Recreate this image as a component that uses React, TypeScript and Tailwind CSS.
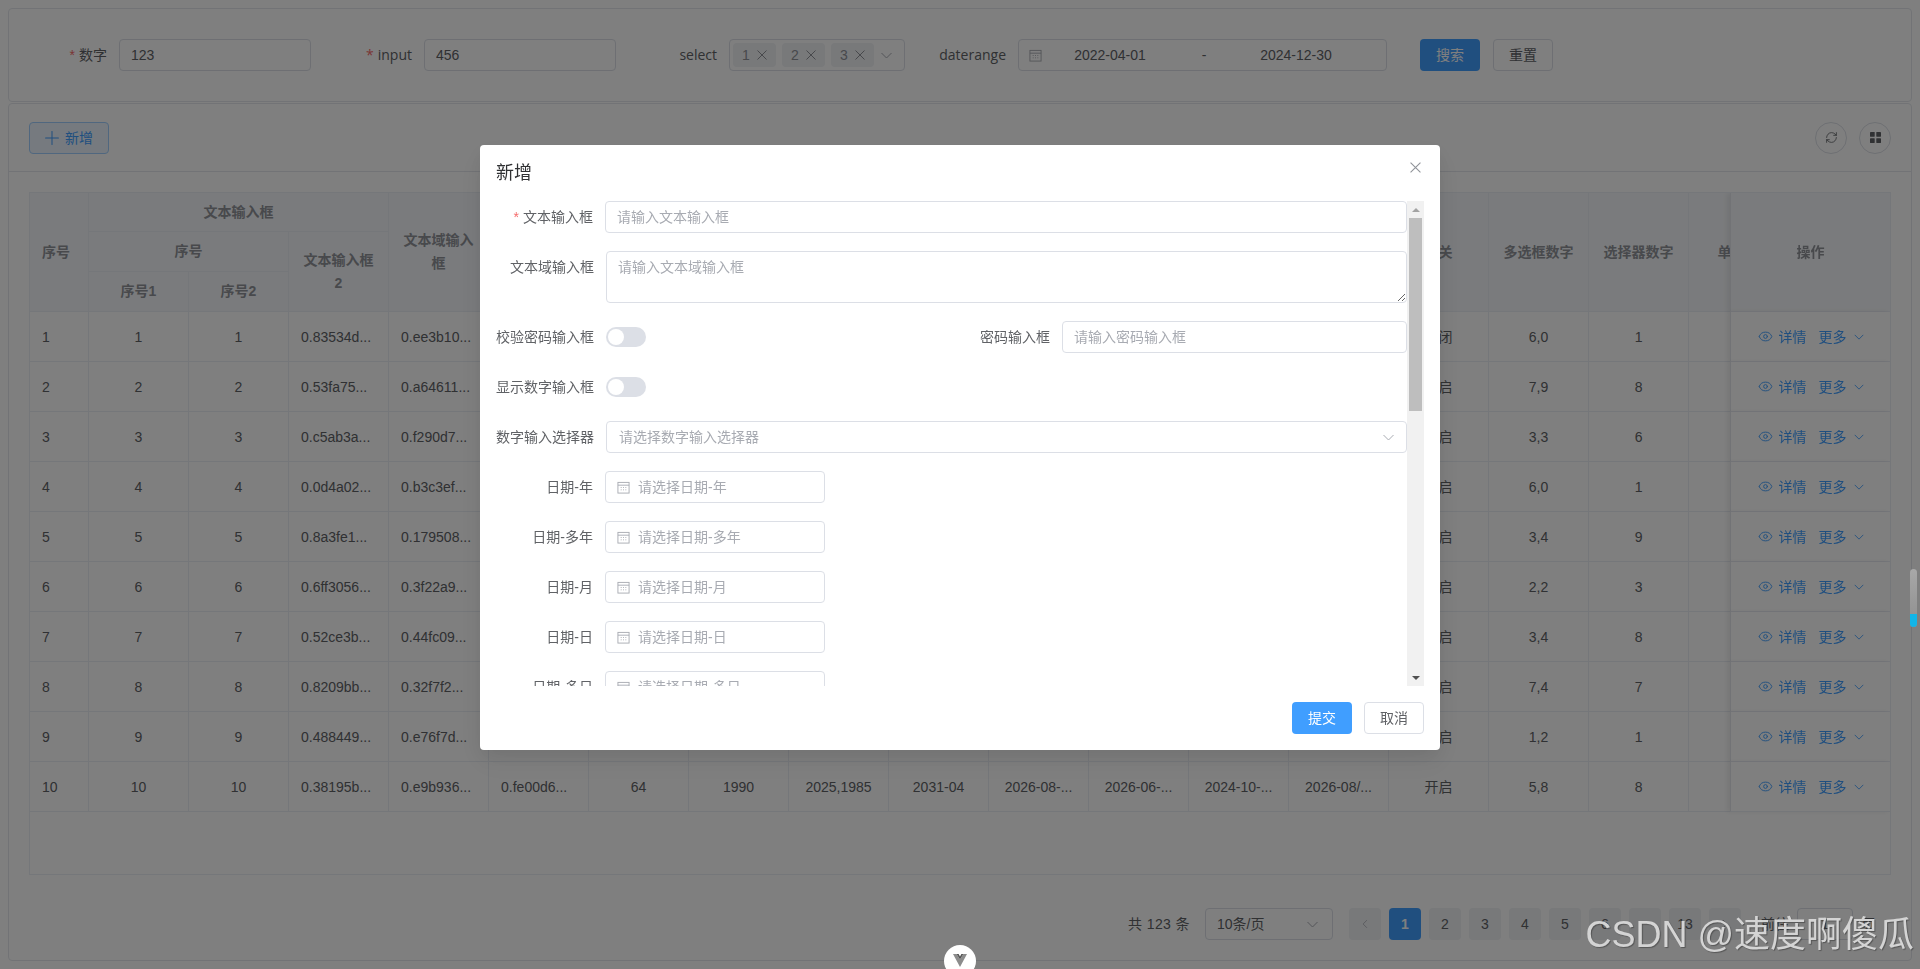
import React from 'react';
import { Eye, Plus, RefreshCw } from 'lucide-react';

const Chevron = ({ className = 'w-[11px] h-[7px] text-[#a8abb2]' }: { className?: string }) => (
  <svg viewBox="0 0 11 7" className={className} fill="none" stroke="currentColor" strokeWidth="1">
    <path d="M0.5 1 L5.5 6 L10.5 1" />
  </svg>
);

const Cross = ({ className = 'w-[10px] h-[10px] text-[#909399]' }: { className?: string }) => (
  <svg viewBox="0 0 10 10" className={className} fill="none" stroke="currentColor" strokeWidth="1">
    <path d="M0.5 0.5 L9.5 9.5 M9.5 0.5 L0.5 9.5" />
  </svg>
);

const CalendarIcon = () => (
  <svg viewBox="0 0 14 14" className="w-[13px] h-[13px] shrink-0 text-[#a8abb2]" fill="none" stroke="currentColor" strokeWidth="1">
    <rect x="1" y="1.5" width="12" height="11.5" />
    <path d="M1 4.5 H13" />
    <path d="M4 7 H5 M6.5 7 H7.5 M9 7 H10 M4 9.5 H5 M6.5 9.5 H7.5 M9 9.5 H10" />
  </svg>
);

const inputClass =
  'block w-full h-8 px-[11px] border border-[#dcdfe6] rounded text-sm text-[#606266] bg-white outline-none placeholder:text-[#a8abb2]';

// rows 1-9 sit behind the dialog from column 6 on
const rest = ['0.fe00d6...', '64', '1990', '2025,1985', '2031-04', '2026-08-...', '2026-06-...', '2024-10-...', '2026-08/...'];

const rows = [
  ['1', '0.83534d...', '0.ee3b10...', '关闭', '6,0', '1'],
  ['2', '0.53fa75...', '0.a64611...', '开启', '7,9', '8'],
  ['3', '0.c5ab3a...', '0.f290d7...', '开启', '3,3', '6'],
  ['4', '0.0d4a02...', '0.b3c3ef...', '开启', '6,0', '1'],
  ['5', '0.8a3fe1...', '0.179508...', '开启', '3,4', '9'],
  ['6', '0.6ff3056...', '0.3f22a9...', '开启', '2,2', '3'],
  ['7', '0.52ce3b...', '0.44fc09...', '开启', '3,4', '8'],
  ['8', '0.8209bb...', '0.32f7f2...', '开启', '7,4', '7'],
  ['9', '0.488449...', '0.e76f7d...', '开启', '1,2', '1'],
  ['10', '0.38195b...', '0.e9b936...', '开启', '5,8', '8'],
];

const hiddenHeads = ['密码输入框', '数字输入框', '日期-年', '日期-多年', '日期-月', '日期-日', '日期-多日', '日期范围', '日期格式'];

const th = 'border-r border-b border-[#ebeef5] bg-[#f5f7fa] px-3 text-sm font-bold text-[#909399] leading-[23px] text-center';
const td = 'h-[50px] border-r border-b border-[#ebeef5] px-3 text-sm text-[#606266] text-center whitespace-nowrap overflow-hidden';
const fixedShadow = 'sticky right-0 border-r-0 shadow-[-3px_0_5px_rgba(0,0,0,0.07)] border-l border-l-[#e4e7ed]';
const latin = "font-['Open_Sans','Noto_Sans_CJK_SC',sans-serif]";

const SearchBar = () => (
  <div className="h-[94px] flex items-center gap-[13px] px-[10px] border border-[#e4e7ed] rounded text-sm text-[#606266]">
    <div className="flex items-center">
      <label className="w-[100px] pr-3 text-right"><span className="text-[#f56c6c] mr-1">*</span>数字</label>
      <input readOnly value="123" className={`${inputClass} !w-[192px]`} />
    </div>
    <div className="flex items-center">
      <label className={`w-[100px] pr-3 text-right ${latin}`}><span className="text-[#f56c6c] mr-1">*</span>input</label>
      <input readOnly value="456" className={`${inputClass} !w-[192px]`} />
    </div>
    <div className="flex items-center">
      <label className={`w-[100px] pr-3 text-right ${latin}`}>select</label>
      <div className="w-[176px] h-8 flex items-center gap-[6px] pl-[3px] border border-[#dcdfe6] rounded">
        {['1', '2', '3'].map((v) => (
          <span key={v} className="w-[43px] h-6 flex items-center justify-between pl-[9px] pr-[9px] bg-[#f0f2f5] rounded text-[#909399]">
            {v}
            <Cross />
          </span>
        ))}
        <span className="ml-[1px]"><Chevron /></span>
      </div>
    </div>
    <div className="flex items-center">
      <label className={`w-[100px] pr-3 text-right ${latin}`}>daterange</label>
      <div className="w-[369px] h-8 flex items-center pl-[10px] border border-[#dcdfe6] rounded">
        <CalendarIcon />
        <span className="w-[128px] ml-1 text-center">2022-04-01</span>
        <span className="w-[60px] text-center">-</span>
        <span className="w-[124px] text-center">2024-12-30</span>
      </div>
    </div>
    <button className="ml-[20px] w-[60px] h-8 rounded bg-[#409eff] text-white">搜索</button>
    <button className="w-[60px] h-8 rounded border border-[#dcdfe6] bg-white">重置</button>
  </div>
);

const DataTable = () => (
  <div className="h-[683px] border border-[#ebeef5] overflow-hidden">
    <table className="w-[1919px] table-fixed border-separate border-spacing-0">
      <colgroup>
        <col className="w-[59px]" />
        {Array.from({ length: 17 }, (_, i) => (
          <col key={i} className="w-[100px]" />
        ))}
        <col className="w-[160px]" />
      </colgroup>
      <thead>
        <tr className="h-[39px]">
          <th rowSpan={3} className={`${th} !text-left`}>序号</th>
          <th colSpan={3} className={th}>文本输入框</th>
          <th rowSpan={3} className={th}>文本域输入框</th>
          {hiddenHeads.map((h) => (
            <th key={h} rowSpan={3} className={th}>{h}</th>
          ))}
          <th rowSpan={3} className={th}>开关</th>
          <th rowSpan={3} className={th}>多选框数字</th>
          <th rowSpan={3} className={th}>选择器数字</th>
          <th rowSpan={3} className={th}>单选框</th>
          <th rowSpan={3} className={`${th} ${fixedShadow}`}>操作</th>
        </tr>
        <tr className="h-[40px]">
          <th colSpan={2} className={th}>序号</th>
          <th rowSpan={2} className={th}>文本输入框2</th>
        </tr>
        <tr className="h-[40px]">
          <th className={th}>序号1</th>
          <th className={th}>序号2</th>
        </tr>
      </thead>
      <tbody>
        {rows.map((r) => (
          <tr key={r[0]}>
            <td className={`${td} !text-left`}>{r[0]}</td>
            <td className={td}>{r[0]}</td>
            <td className={td}>{r[0]}</td>
            <td className={`${td} !text-left`}>{r[1]}</td>
            <td className={`${td} !text-left`}>{r[2]}</td>
            {rest.map((v, i) => (
              <td key={i} className={`${td} ${i === 0 ? '!text-left' : ''}`}>{v}</td>
            ))}
            <td className={td}>{r[3]}</td>
            <td className={td}>{r[4]}</td>
            <td className={td}>{r[5]}</td>
            <td className={td}>1</td>
            <td className={`${td} ${fixedShadow} bg-white`}>
              <div className="flex items-center justify-center text-[#409eff]">
                <Eye size={15} strokeWidth={1.5} className="mr-[6px]" />
                <span className="mr-3">详情</span>
                <span className="mr-[7px]">更多</span>
                <Chevron className="w-[10px] h-[6px]" />
              </div>
            </td>
          </tr>
        ))}
      </tbody>
    </table>
  </div>
);

const Pager = () => (
  <div className="mt-[33px] pr-4 flex items-center justify-end text-sm text-[#606266]">
    <span className="mr-[15px] tracking-[0.4px]">共 123 条</span>
    <div className="w-[128px] h-8 flex items-center justify-between pl-[11px] pr-[14px] border border-[#dcdfe6] rounded">
      10条/页
      <Chevron />
    </div>
    <div className="ml-[16px] flex gap-2">
      <div className="w-8 h-8 flex items-center justify-center rounded bg-[#f0f2f5]">
        <Chevron className="w-[6px] h-[10px] text-[#a8abb2] rotate-90 scale-[1.4]" />
      </div>
      {['1', '2', '3', '4', '5', '6', '', '13'].map((p, i) => (
        <div
          key={i}
          className={`w-8 h-8 flex items-center justify-center rounded ${
            p === '1' ? 'bg-[#409eff] text-white font-bold' : 'bg-[#f0f2f5] text-[#606266]'
          }`}
        >
          {p}
        </div>
      ))}
      <div className="w-8 h-8 flex items-center justify-center rounded bg-[#f0f2f5]">
        <Chevron className="w-[6px] h-[10px] text-[#606266] -rotate-90 scale-[1.4]" />
      </div>
    </div>
    <span className="ml-5">前往</span>
    <div className="mx-2 w-[56px] h-8 flex items-center justify-center border border-[#dcdfe6] rounded">1</div>
    <span>页</span>
  </div>
);

const FormItem = ({
  label,
  required,
  wide,
  children,
}: {
  label: string;
  required?: boolean;
  wide?: boolean;
  children: React.ReactNode;
}) => (
  <div className="flex items-start mb-[18px] flex-1 min-w-0">
    <label className={`${wide ? 'w-[111px]' : 'w-[110px]'} shrink-0 pr-3 text-right text-sm leading-8 text-[#606266]`}>
      {required && <span className="text-[#f56c6c] mr-1">*</span>}
      {label}
    </label>
    <div className="flex-1 min-w-0">{children}</div>
  </div>
);

const Switch = () => (
  <div className="h-8 flex items-center">
    <span className="w-10 h-5 pl-[2px] flex items-center rounded-full bg-[#dcdfe6]">
      <span className="w-4 h-4 rounded-full bg-white" />
    </span>
  </div>
);

const DateField = ({ label }: { label: string }) => (
  <FormItem label={label}>
    <div className="w-[220px] h-8 flex items-center gap-[8px] pl-[11px] border border-[#dcdfe6] rounded text-sm text-[#a8abb2]">
      <CalendarIcon />
      {`请选择${label}`}
    </div>
  </FormItem>
);

const FakeScrollbar = () => (
  <div className="w-[17px] shrink-0 h-full flex flex-col items-center bg-[#f1f1f1]">
    <div className="h-[17px] flex items-center justify-center">
      <span className="w-0 h-0 border-x-[4px] border-x-transparent border-b-[4px] border-b-[#a3a3a3]" />
    </div>
    <div className="w-[13px] h-[193px] bg-[#bebebe]" />
    <div className="mt-auto h-[17px] flex items-center justify-center">
      <span className="w-0 h-0 border-x-[4px] border-x-transparent border-t-[4px] border-t-[#505050]" />
    </div>
  </div>
);

const AddDialog = () => (
  <div className="mx-auto mt-[145px] w-[960px] h-[605px] rounded bg-white shadow-[0_12px_32px_4px_rgba(0,0,0,0.04),0_8px_20px_rgba(0,0,0,0.08)]">
    <div className="h-14 pl-4 pr-[19px] flex items-center justify-between">
      <span className="text-lg text-[#303133]">新增</span>
      <Cross className="w-[11px] h-[11px] mb-3 text-[#909399]" />
    </div>
    <div className="h-[485px] pl-[15px] pr-4 flex">
      <div className="flex-1 min-w-0 overflow-hidden">
        <FormItem label="文本输入框" required>
          <input readOnly placeholder="请输入文本输入框" className={inputClass} />
        </FormItem>
        <FormItem label="文本域输入框" wide>
          <textarea readOnly rows={2} placeholder="请输入文本域输入框" className={`${inputClass} !h-[52px] py-[5px] leading-[21px]`} />
        </FormItem>
        <div className="flex">
          <FormItem label="校验密码输入框" wide><Switch /></FormItem>
          <FormItem label="密码输入框" wide>
            <input readOnly placeholder="请输入密码输入框" className={inputClass} />
          </FormItem>
        </div>
        <FormItem label="显示数字输入框" wide><Switch /></FormItem>
        <FormItem label="数字输入选择器" wide>
          <div className="h-8 flex items-center justify-between pl-3 pr-3 border border-[#dcdfe6] rounded text-sm text-[#a8abb2]">
            请选择数字输入选择器
            <Chevron />
          </div>
        </FormItem>
        <DateField label="日期-年" />
        <DateField label="日期-多年" />
        <DateField label="日期-月" />
        <DateField label="日期-日" />
        <DateField label="日期-多日" />
      </div>
      <FakeScrollbar />
    </div>
    <div className="pt-4 pr-4 flex justify-end gap-3 text-sm">
      <button className="w-[60px] h-8 rounded bg-[#409eff] text-white">提交</button>
      <button className="w-[60px] h-8 rounded border border-[#dcdfe6] text-[#606266]">取消</button>
    </div>
  </div>
);

export default function App() {
  return (
    <div className="h-[969px] overflow-hidden p-2 bg-white font-['Liberation_Sans','Noto_Sans_CJK_SC',sans-serif]">
      <SearchBar />
      <div className="mt-[1px] h-[858px] border border-[#e4e7ed] rounded">
        <div className="h-[68px] px-5 flex items-center justify-between border-b border-[#e4e7ed]">
          <button className="w-20 h-8 flex items-center justify-center gap-[6px] rounded border border-[#a0cfff] bg-[#ecf5ff] text-sm text-[#409eff]">
            <Plus size={22} strokeWidth={1.1} className="-mx-1" />
            新增
          </button>
          <div className="flex gap-3 text-[#606266]">
            <button className="w-8 h-8 flex items-center justify-center rounded-full border border-[#dcdfe6]">
              <RefreshCw size={13} strokeWidth={1.5} />
            </button>
            <button className="w-8 h-8 flex items-center justify-center rounded-full border border-[#dcdfe6]">
              <svg viewBox="0 0 11 11" className="w-[11px] h-[11px]" fill="currentColor">
                <rect width="4.7" height="4.7" rx="0.4" />
                <rect x="6.3" width="4.7" height="4.7" rx="0.4" />
                <rect y="6.3" width="4.7" height="4.7" rx="0.4" />
                <rect x="6.3" y="6.3" width="4.7" height="4.7" rx="0.4" />
              </svg>
            </button>
          </div>
        </div>
        <div className="px-5 pt-5">
          <DataTable />
          <Pager />
        </div>
      </div>

      {/* modal mask */}
      <div className="fixed inset-0 z-10 bg-black/50">
        <AddDialog />
      </div>

      {/* devtools toggle, bottom centre */}
      <div className="fixed z-20 left-[944px] top-[945px] w-8 h-8 rounded-full bg-white flex items-center justify-center">
        <svg viewBox="0 0 14 13" className="w-[14px] h-[13px] -mt-[1px]">
          <path d="M0 0 H3.6 L7 5.6 L10.4 0 H14 L7 13 Z" fill="#8c8c8c" />
          <path d="M3.6 0 H5.6 L7 2.6 L8.4 0 H10.4 L7 5.6 Z" fill="#555" />
        </svg>
      </div>

      {/* side scroll widget */}
      <div className="fixed z-20 left-[1910px] top-[569px] w-[7px] h-[58px] rounded-full overflow-hidden flex flex-col bg-gradient-to-b from-[#a8a8a8] to-[#8e8e8e]">
        <div className="mt-auto h-[13px] bg-[#12b5e8]" />
      </div>

      {/* watermark */}
      <div className="fixed z-30 right-[6px] top-[913px] text-[36px] leading-[44px] whitespace-nowrap text-[#d4d4d4] [text-shadow:1px_1px_1px_rgba(60,60,60,0.6)]">
        CSDN @速度啊傻瓜
      </div>
    </div>
  );
}
